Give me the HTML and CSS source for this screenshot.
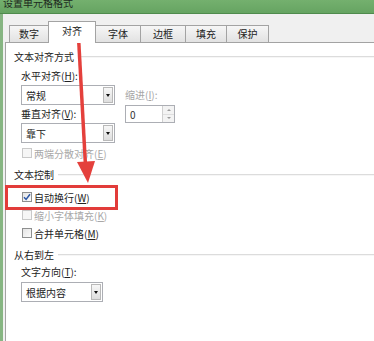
FILE: index.html
```html
<!DOCTYPE html>
<html lang="zh-CN">
<head>
  <meta charset="UTF-8">
  <title>设置单元格格式</title>
  <link rel="stylesheet" href="styles.css">
</head>
<body>

  <div class="window">
    <div class="titlebar"><span class="title">设置单元格格式</span></div>

    <div class="frame">
      <div class="tabs">
        <div class="tab t-num">数字</div>
        <div class="tab t-align active">对齐</div>
        <div class="tab t-font">字体</div>
        <div class="tab t-border">边框</div>
        <div class="tab t-fill">填充</div>
        <div class="tab t-protect">保护</div>
      </div>

      <div class="panel">
        <div class="group-title">文本对齐方式</div>

        <div class="align-grid">
          <div class="label row1">水平对齐(<u>H</u>):</div>
          <div></div>
          <div class="select">
            <span>常规</span>
            <span class="drop"><i></i></span>
          </div>
          <div class="label muted">缩进(<u>I</u>):</div>
          <div class="label">垂直对齐(<u>V</u>):</div>
          <div class="spin">
            <span>0</span>
            <span class="spin-btns"><i class="up"></i><i class="down"></i></span>
          </div>
          <div class="select tall">
            <span>靠下</span>
            <span class="drop"><i></i></span>
          </div>
          <div></div>
        </div>

        <div class="check disabled"><span class="box"></span>两端分散对齐(<u>E</u>)</div>

        <div class="group-title">文本控制</div>
        <div class="check first"><span class="box checked">
          <svg width="8" height="8" viewBox="0 0 8 8"><path d="M1 4.2 L3.1 6.4 L7 1.2" fill="none" stroke="#2b57a6" stroke-width="1.5"/></svg>
        </span>自动换行(<u>W</u>)</div>
        <div class="check disabled"><span class="box"></span>缩小字体填充(<u>K</u>)</div>
        <div class="check"><span class="box"></span>合并单元格(<u>M</u>)</div>

        <div class="group-title">从右到左</div>
        <div class="label indent">文字方向(<u>T</u>):</div>
        <div class="select narrow">
          <span>根据内容</span>
          <span class="drop"><i></i></span>
        </div>
      </div>
    </div>

    <div class="highlight"></div>
    <svg class="arrow" width="374" height="341" viewBox="0 0 374 341">
      <line x1="78.5" y1="37" x2="85.5" y2="166" stroke="#e4403c" stroke-width="3.5"/>
      <polygon points="77,162 95,161 88,183" fill="#e4403c"/>
    </svg>
  </div>

</body>
</html>
```

FILE: styles.css
```css
body {
  margin: 0;
  font-family: "Noto Sans CJK SC", "Noto Sans", sans-serif;
  font-size: 10px;
  color: #222;
  overflow: hidden;
}

.window {
  position: relative;
  width: 374px;
  height: 341px;
  overflow: hidden;
  background: #f0f0f0;
}

.titlebar {
  height: 13px;
  background: linear-gradient(#74b06e, #66a462);
  border-bottom: 1px solid #4f8b4d;
  padding-left: 3px;
  overflow: hidden;
}

.title {
  display: block;
  margin-top: -3px;
  font-size: 10px;
  line-height: 12px;
  color: #1e2a1e;
}

.frame {
  display: flex;
  flex-direction: column;
  height: 327px;
  border-left: 3px solid #86b582;
  padding-left: 2px;
}

.tabs {
  display: flex;
  align-items: flex-end;
  height: 28px;
  padding-left: 4px;
}

.tab {
  height: 16px;
  line-height: 16px;
  text-align: center;
  background: linear-gradient(#f6f6f6, #e2e2e2);
  border: 1px solid #a3a3a3;
  border-bottom: none;
  margin-left: -1px;
  box-sizing: content-box;
}

.t-num { width: 38px; margin-left: 0; }
.t-font { width: 44px; }
.t-border { width: 44px; }
.t-fill { width: 40px; }
.t-protect { width: 41px; }

.tab.active {
  position: relative;
  z-index: 1;
  width: 46px;
  height: 21px;
  line-height: 18px;
  margin-bottom: -1px;
  background: #fff;
}

.panel {
  flex: 1;
  background: #fff;
  border-top: 1px solid #a3a3a3;
  border-left: 1px solid #a3a3a3;
  padding-left: 8px;
}

.group-title {
  display: flex;
  align-items: center;
  height: 14px;
  line-height: 14px;
  margin-top: 7px;
}

.group-title::after {
  content: "";
  flex: 1;
  margin-left: 4px;
  border-top: 1px solid #dcdcdc;
  border-bottom: 1px solid #f6f6f6;
}

.align-grid {
  display: grid;
  grid-template-columns: 94px 50px;
  grid-template-rows: 21px 20px 18px 20px;
  column-gap: 10px;
  margin-left: 7px;
}

.label {
  line-height: 16px;
  align-self: center;
}

.label.row1 {
  align-self: end;
  padding-bottom: 1px;
}

.label.indent {
  margin-left: 7px;
  margin-top: 2px;
}

.muted {
  color: #a6a6a6;
}

.select {
  display: flex;
  justify-content: space-between;
  align-items: center;
  height: 20px;
  box-sizing: border-box;
  border: 1px solid #acaeb4;
  background: #fff;
  padding-left: 4px;
}

.select.narrow {
  width: 82px;
  margin-left: 7px;
  margin-top: 2px;
}

.drop {
  display: flex;
  align-items: center;
  justify-content: center;
  width: 10px;
  height: 16px;
  margin-right: 1px;
  border: 1px solid #b9b9b9;
  box-sizing: border-box;
  background: linear-gradient(#f7f7f7, #dedede);
}

.drop i {
  width: 0;
  height: 0;
  border-left: 2.5px solid transparent;
  border-right: 2.5px solid transparent;
  border-top: 3px solid #111;
}

.spin {
  display: flex;
  justify-content: space-between;
  align-items: center;
  height: 18px;
  box-sizing: border-box;
  border: 1px solid #acaeb4;
  padding-left: 4px;
  color: #333;
}

.spin-btns {
  display: flex;
  flex-direction: column;
  width: 11px;
  height: 16px;
  border-left: 1px solid #d0d0d0;
}

.spin-btns i {
  flex: 1;
  display: flex;
  align-items: center;
  justify-content: center;
  background: #f3f3f3;
}

.spin-btns i::before {
  content: "";
  border-left: 2px solid transparent;
  border-right: 2px solid transparent;
}

.spin-btns .up::before { border-bottom: 2px solid #9a9a9a; }
.spin-btns .down::before { border-top: 2px solid #9a9a9a; }
.spin-btns .up { border-bottom: 1px solid #dedede; }

.check {
  display: flex;
  align-items: center;
  height: 16px;
  margin-top: 2px;
  margin-left: 8px;
}

.check.first {
  margin-top: 7px;
}

.box {
  display: flex;
  align-items: center;
  justify-content: center;
  width: 10px;
  height: 10px;
  box-sizing: border-box;
  border: 1px solid #8e8f8f;
  background: linear-gradient(135deg, #e4e4e4, #fbfbfb);
  margin-right: 2px;
}

.check.disabled {
  color: #a8a8a8;
}

.check.disabled .box {
  border-color: #c9c9c9;
  background: #f6f6f6;
}

.highlight {
  position: absolute;
  left: 5px;
  top: 185px;
  width: 113px;
  height: 25px;
  box-sizing: border-box;
  border: 3px solid #e23c3a;
}

.arrow {
  position: absolute;
  left: 0;
  top: 0;
  pointer-events: none;
}
```
